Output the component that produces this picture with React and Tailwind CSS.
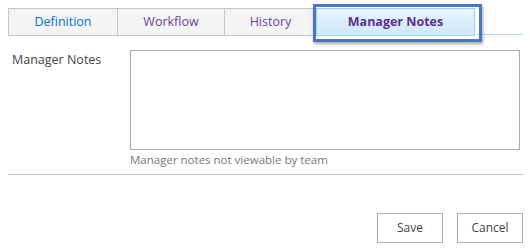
import React from 'react';

const font = { fontFamily: '"Open Sans", "Noto Sans", Arial, sans-serif' };

const Tab = ({ label, color, width }) => (
  <div
    className={`flex items-center justify-center h-[28px] border border-[#c6c6c6] bg-[#f4f4f4] -ml-px first:ml-0 text-[12.5px] ${width} ${color}`}
  >
    {label}
  </div>
);

export default function App() {
  return (
    <div className="w-[530px] h-[249px] bg-white pt-[8px] pl-[8px] pr-[7px]" style={font}>
      {/* tab strip */}
      <div className="flex items-end">
        <Tab label="Definition" color="text-[#0072c6]" width="w-[110px]" />
        <Tab label="Workflow" color="text-[#6b3fa0]" width="w-[108px]" />
        <Tab label="History" color="text-[#6b3fa0]" width="w-[93px]" />
        <div className="relative -ml-px">
          <div className="flex items-center justify-center w-[159px] h-[28px] border border-[#9ccff0] bg-gradient-to-b from-[#e8f4fd] to-[#cfe8fb] font-bold text-[12.5px] text-[#5c2d91]">
            Manager Notes
          </div>
          {/* highlight box */}
          <div className="absolute left-[-3px] top-[-4px] w-[169px] h-[38px] border-[3px] border-[#4a76c6] shadow-[1px_2px_3px_rgba(0,0,0,0.35)] pointer-events-none" />
        </div>
        <div className="flex-1 border-b border-[#b5d6f2] ml-[2px] mb-px" />
      </div>

      {/* form row */}
      <div className="flex mt-[14px]">
        <div className="w-[122px] pl-[4px] pt-[1px] text-[12.5px] text-[#444]">Manager Notes</div>
        <div className="flex flex-col">
          <textarea className="w-[390px] h-[100px] border border-[#ababab] resize-none outline-none" />
          <div className="mt-[1px] text-[11.5px] text-[#777]">Manager notes not viewable by team</div>
        </div>
      </div>

      <div className="mt-[6px] mr-[-1px] border-t border-[#c6c6c6]" />

      {/* buttons */}
      <div className="flex justify-end gap-[14px] mt-[38px]">
        <button className="w-[66px] h-[30px] border border-[#ababab] bg-white text-[12px] text-[#444]">Save</button>
        <button className="w-[66px] h-[30px] border border-[#ababab] bg-white text-[12px] text-[#444]">Cancel</button>
      </div>
    </div>
  );
}
